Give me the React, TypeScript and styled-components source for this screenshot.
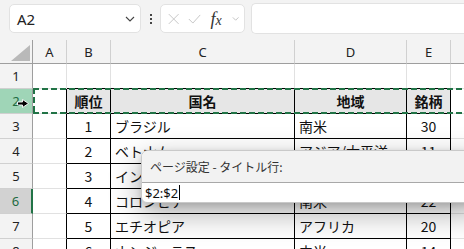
import React from 'react';
import styled, { createGlobalStyle } from 'styled-components';

const GlobalStyle = createGlobalStyle`
  html, body {
    margin: 0;
    padding: 0;
    width: 464px;
    height: 249px;
    overflow: hidden;
    background: #ffffff;
  }
`;

const UI_FONT = `'Noto Sans', 'Liberation Sans', 'Noto Sans CJK JP', sans-serif`;
const CELL_FONT = `'Noto Sans CJK JP', 'Noto Sans', sans-serif`;

const COLS = ['A', 'B', 'C', 'D', 'E', ''];

type Row = { num: number; cells: (string | number)[] };

const ROWS: Row[] = [
  { num: 1, cells: ['', '', '', '', '', ''] },
  { num: 2, cells: ['', '順位', '国名', '地域', '銘柄', ''] },
  { num: 3, cells: ['', 1, 'ブラジル', '南米', 30, ''] },
  { num: 4, cells: ['', 2, 'ベトナム', 'アジア/太平洋', 11, ''] },
  { num: 5, cells: ['', 3, 'インドネシア', 'アジア/太平洋', 17, ''] },
  { num: 6, cells: ['', 4, 'コロンビア', '南米', 22, ''] },
  { num: 7, cells: ['', 5, 'エチオピア', 'アフリカ', 20, ''] },
  { num: 8, cells: ['', 6, 'ホンジュラス', '中米', 14, ''] },
];

const App = () => {
  return (
    <Page>
      <GlobalStyle />
      <Toolbar>
        <NameBox>
          <NameText>A2</NameText>
          <svg width="10" height="6" viewBox="0 0 10 6">
            <path d="M1 1 L5 5 L9 1" fill="none" stroke="#444" strokeWidth="1.1" />
          </svg>
        </NameBox>
        <Dots>
          <span />
          <span />
          <span />
        </Dots>
        <FormulaButtons>
          <svg width="14" height="14" viewBox="0 0 14 14">
            <path d="M1 1 L13 13 M13 1 L1 13" stroke="#c6c6c6" strokeWidth="1.2" />
          </svg>
          <svg width="16" height="14" viewBox="0 0 16 14">
            <path d="M1 7 L6 12 L15 2" fill="none" stroke="#c6c6c6" strokeWidth="1.2" />
          </svg>
          <Fx>
            f<sub>x</sub>
          </Fx>
          <svg width="9" height="6" viewBox="0 0 9 6">
            <path d="M1 1 L4.5 4.5 L8 1" fill="none" stroke="#b8b8b8" strokeWidth="1" />
          </svg>
        </FormulaButtons>
        <FormulaInput />
      </Toolbar>

      <SheetArea>
        <Sheet>
          <Corner>
            <svg width="19" height="16" viewBox="0 0 19 16">
              <path d="M19 0 L19 16 L0 16 Z" fill="#b9b9b9" />
            </svg>
          </Corner>
          {COLS.map((c, i) => (
            <ColHead key={i}>{c}</ColHead>
          ))}
          {ROWS.map((row) => (
            <React.Fragment key={row.num}>
              <RowHead $state={row.num === 2 ? 'copy' : row.num === 6 ? 'hover' : 'none'}>
                {row.num}
                {row.num === 2 && (
                  <Cursor width="12" height="9" viewBox="0 0 12 9">
                    <path
                      d="M0.5 3 H5.5 V0.5 L11.5 4.5 L5.5 8.5 V6 H0.5 Z"
                      fill="#000"
                      stroke="#fff"
                      strokeWidth="0.9"
                    />
                  </Cursor>
                )}
              </RowHead>
              {row.cells.map((v, ci) => {
                const inTable = row.num >= 2 && ci >= 1 && ci <= 4;
                const leftOfTable = row.num >= 2 && ci === 0;
                const aboveTable = row.num === 1 && ci >= 1 && ci <= 4;
                const align = ci === 1 || ci === 4 || row.num === 2 ? 'center' : 'left';
                return (
                  <Cell
                    key={ci}
                    $strong={inTable || leftOfTable}
                    $strongBottom={inTable || aboveTable}
                    $header={row.num === 2 && inTable}
                    $align={align}
                  >
                    {v}
                  </Cell>
                );
              })}
            </React.Fragment>
          ))}
        </Sheet>
        <CopyMarquee />
        <Dialog>
          <DialogTitle>ページ設定 - タイトル行:</DialogTitle>
          <DialogInput>
            $2:$2
            <Caret />
          </DialogInput>
        </Dialog>
      </SheetArea>
    </Page>
  );
};

const Page = styled.div`
  width: 464px;
  height: 249px;
  overflow: hidden;
  background: #ffffff;
`;

const Toolbar = styled.div`
  display: flex;
  align-items: center;
  height: 40px;
  padding: 0 0 3px 9px;
  box-sizing: border-box;
  background: #f3f3f3;
`;

const NameBox = styled.div`
  display: flex;
  align-items: center;
  justify-content: space-between;
  width: 132px;
  height: 29px;
  box-sizing: border-box;
  padding: 0 5px 0 7px;
  background: #ffffff;
  border: 1px solid #e2e2e2;
  border-radius: 5px;
`;

const NameText = styled.span`
  font-family: ${UI_FONT};
  font-size: 15px;
  color: #222;
`;

const Dots = styled.div`
  display: flex;
  flex-direction: column;
  gap: 2px;
  margin: 0 8px 0 9px;

  span {
    width: 2px;
    height: 2px;
    background: #444;
  }
`;

const FormulaButtons = styled.div`
  display: flex;
  align-items: center;
  gap: 9px;
  width: 85px;
  height: 29px;
  box-sizing: border-box;
  padding: 0 5px 0 7px;
  background: #ffffff;
  border: 1px solid #e2e2e2;
  border-radius: 5px;
`;

const Fx = styled.span`
  font-family: 'Liberation Serif', serif;
  font-style: italic;
  font-size: 18px;
  color: #333;
  line-height: 1;
  margin-right: 1px;

  sub {
    font-size: 14px;
    vertical-align: 0;
  }
`;

const FormulaInput = styled.div`
  flex: 1;
  height: 29px;
  margin-left: 6px;
  background: #ffffff;
  border: 1px solid #e2e2e2;
  border-right: none;
  border-radius: 5px 0 0 5px;
`;

const SheetArea = styled.div`
  position: relative;
`;

const Sheet = styled.div`
  display: grid;
  grid-template-columns: 33px 34px 44px 184px 112px 44px 40px;
  grid-template-rows: 24px;
  grid-auto-rows: 25px;
`;

const Corner = styled.div`
  display: flex;
  align-items: flex-end;
  justify-content: flex-end;
  padding: 0 2px 2px 0;
  background: #f3f3f3;
  border-right: 1px solid #9e9e9e;
  border-bottom: 1px solid #9e9e9e;
  box-sizing: border-box;
`;

const ColHead = styled.div`
  display: flex;
  align-items: center;
  justify-content: center;
  background: #f3f3f3;
  border-right: 1px solid #d0d0d0;
  border-bottom: 1px solid #9e9e9e;
  box-sizing: border-box;
  font-family: ${UI_FONT};
  font-size: 13px;
  color: #222;
`;

const RowHead = styled.div<{ $state: 'copy' | 'hover' | 'none' }>`
  position: relative;
  display: flex;
  align-items: center;
  justify-content: center;
  box-sizing: border-box;
  font-family: ${UI_FONT};
  font-size: 13px;
  color: ${(p) => (p.$state === 'none' ? '#222' : '#1e6b41')};
  background: ${(p) =>
    p.$state === 'copy' ? '#9fd5b7' : p.$state === 'hover' ? '#d2d2d2' : '#f3f3f3'};
  border-bottom: 1px solid #d0d0d0;
  border-right: ${(p) => (p.$state === 'hover' ? '2px solid #217346' : '1px solid #9e9e9e')};
`;

const Cursor = styled.svg`
  position: absolute;
  left: 17px;
  top: 10px;
`;

const Cell = styled.div<{
  $strong: boolean;
  $strongBottom: boolean;
  $header: boolean;
  $align: 'left' | 'center';
}>`
  display: flex;
  align-items: center;
  justify-content: ${(p) => (p.$align === 'center' ? 'center' : 'flex-start')};
  padding: 0 4px;
  overflow: hidden;
  white-space: nowrap;
  box-sizing: border-box;
  border-right: 1px solid ${(p) => (p.$strong ? '#000' : '#e1e1e1')};
  border-bottom: 1px solid ${(p) => (p.$strongBottom ? '#000' : '#e1e1e1')};
  background: ${(p) => (p.$header ? '#e6e6e6' : '#ffffff')};
  font-family: ${CELL_FONT};
  font-size: 14px;
  font-weight: ${(p) => (p.$header ? 700 : 400)};
  color: #111;
`;

const CopyMarquee = styled.div`
  position: absolute;
  left: 33px;
  top: 48px;
  width: 440px;
  height: 26px;
  pointer-events: none;
  background-image:
    repeating-linear-gradient(90deg, #217346 0 6px, transparent 6px 9px),
    repeating-linear-gradient(90deg, #217346 0 6px, transparent 6px 9px),
    repeating-linear-gradient(180deg, #217346 0 6px, transparent 6px 9px);
  background-size: 100% 2px, 100% 2px, 2px 100%;
  background-position: 0 0, 0 100%, 0 0;
  background-repeat: no-repeat;
`;

const Dialog = styled.div`
  position: absolute;
  left: 141px;
  top: 110px;
  width: 340px;
  height: 53px;
  box-sizing: border-box;
  display: flex;
  flex-direction: column;
  overflow: hidden;
  background: #ffffff;
  border: 1px solid #c9c9c9;
  border-radius: 7px 0 0 6px;
  box-shadow: 0 10px 30px rgba(0, 0, 0, 0.34), 0 2px 6px rgba(0, 0, 0, 0.12);
`;

const DialogTitle = styled.div`
  display: flex;
  align-items: center;
  height: 31px;
  padding: 0 8px;
  background: #f2f2f2;
  border-bottom: 1px solid #a8a8a8;
  font-family: ${CELL_FONT};
  font-size: 12px;
  color: #333;
`;

const DialogInput = styled.div`
  display: flex;
  align-items: center;
  flex: 1;
  padding: 0 3px;
  font-family: ${UI_FONT};
  font-size: 13px;
  color: #111;
`;

const Caret = styled.span`
  display: inline-block;
  width: 1px;
  height: 15px;
  margin-left: 1px;
  background: #000;
`;

export default App;
